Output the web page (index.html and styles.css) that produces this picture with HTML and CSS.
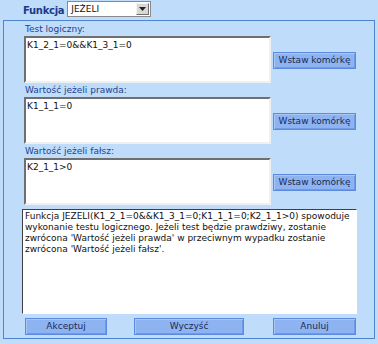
FILE: index.html
```html
<!DOCTYPE html>
<html>
<head>
<meta charset="utf-8">
<link rel="stylesheet" href="styles.css">
</head>
<body>
<div class="top">
  <span class="fn-label">Funkcja</span>
  <div class="select">
    <span class="select-text">JEŻELI</span>
    <span class="select-btn"><svg width="7" height="4" viewBox="0 0 7 4"><path d="M0 0h7L3.5 4z" fill="#222"/></svg></span>
  </div>
</div>
<div class="panel">
  <div class="group">
    <div class="label">Test logiczny:</div>
    <div class="row">
      <div class="field">K1_2_1=0&amp;&amp;K1_3_1=0</div>
      <button class="btn btn-insert">Wstaw komórkę</button>
    </div>
  </div>
  <div class="group">
    <div class="label">Wartość jeżeli prawda:</div>
    <div class="row">
      <div class="field">K1_1_1=0</div>
      <button class="btn btn-insert">Wstaw komórkę</button>
    </div>
  </div>
  <div class="group">
    <div class="label">Wartość jeżeli fałsz:</div>
    <div class="row">
      <div class="field">K2_1_1&gt;0</div>
      <button class="btn btn-insert">Wstaw komórkę</button>
    </div>
  </div>
  <div class="desc">Funkcja JEZELI(K1_2_1=0&amp;&amp;K1_3_1=0;K1_1_1=0;K2_1_1&gt;0) spowoduje<br>wykonanie testu logicznego. Jeżeli test będzie prawdziwy, zostanie<br>zwrócona 'Wartość jeżeli prawda' w przeciwnym wypadku zostanie<br>zwrócona 'Wartość jeżeli fałsz'.</div>
  <div class="actions">
    <button class="btn btn-accept">Akceptuj</button>
    <button class="btn btn-clear">Wyczyść</button>
    <button class="btn btn-cancel">Anuluj</button>
  </div>
</div>
</body>
</html>
```
FILE: styles.css
```css
html, body {
  margin: 0;
  padding: 0;
  background: #bfdcfa;
}
body {
  font-family: "DejaVu Sans", Verdana, sans-serif;
  font-size: 9px;
  color: #1a1a1a;
  width: 378px;
  height: 344px;
  overflow: hidden;
}
.top {
  height: 20px;
  display: flex;
  align-items: center;
  padding-left: 23px;
  box-sizing: border-box;
}
.fn-label {
  font-weight: bold;
  font-size: 10px;
  color: #1c3a8c;
  margin-right: 3px;
  letter-spacing: -0.3px;
}
.select {
  width: 82px;
  height: 14px;
  background: #fff;
  border: 1px solid #8a8a8a;
  display: flex;
  align-items: center;
  justify-content: space-between;
  margin-top: -2px;
}
.select-text {
  font-size: 9px;
  padding-left: 3px;
  color: #111;
}
.select-btn {
  width: 13px;
  height: 12px;
  margin-right: 1px;
  background: #d8d8d4;
  border: 1px solid;
  border-color: #f4f4f4 #707070 #707070 #f4f4f4;
  box-sizing: border-box;
  display: flex;
  align-items: center;
  justify-content: center;
}
.panel {
  margin-left: 3px;
  width: 372px;
  height: 319px;
  box-sizing: border-box;
  border: 1px solid #4f84cf;
  padding: 1px 0 0 20px;
}
.group {
  display: flex;
  flex-direction: column;
}
.label {
  height: 14px;
  line-height: 14px;
  padding-left: 1px;
  color: #23438f;
}
.row {
  display: flex;
  align-items: center;
  height: 47px;
}
.field {
  width: 247px;
  height: 47px;
  box-sizing: border-box;
  background: #fff;
  border: 2px solid;
  border-color: #6f6f6f #f0f0f0 #f0f0f0 #6f6f6f;
  padding: 2px 0 0 1px;
  color: #111;
  line-height: 11px;
}
.btn {
  font-family: "DejaVu Sans", Verdana, sans-serif;
  font-size: 9px;
  color: #1b2a55;
  background: #8db4f1;
  border: 1px solid #5d8ae0;
  box-shadow: inset 1px 1px 0 #a8c7f7, inset -1px -1px 0 #6e9ae6;
  height: 17px;
  padding: 0;
  margin: 0;
  line-height: 15px;
}
.btn-insert {
  width: 83px;
  margin-left: 2px;
  margin-top: 1px;
}
.desc {
  margin-top: 4px;
  margin-left: -2px;
  width: 335px;
  height: 105px;
  box-sizing: border-box;
  background: #fff;
  border: 1px solid;
  border-color: #3f3f3f #ffffff #ffffff #3f3f3f;
  padding: 1px 0 0 2px;
  line-height: 11px;
  color: #111;
}
.actions {
  display: flex;
  margin-top: 4px;
}
.btn-accept { width: 82px; margin-left: 1px; }
.btn-clear { width: 110px; margin-left: 27px; }
.btn-cancel { width: 83px; margin-left: 29px; }
```
